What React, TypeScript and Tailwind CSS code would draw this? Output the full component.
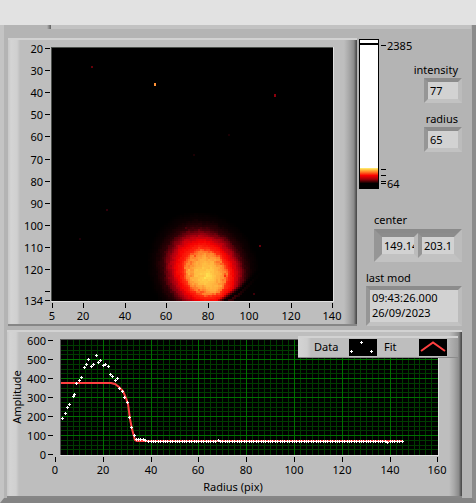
import type { ReactNode } from "react";

const font = "font-['Noto_Sans','Open_Sans',sans-serif]";

/* ---------- shared pieces ---------- */

function Panel({ children, className = "" }: { children: ReactNode; className?: string }) {
  return (
    <section
      className={
        "relative border-t-2 border-b-2 border-t-[#d2d2d2] border-b-[#868686] bg-[linear-gradient(to_right,#c8c8c8_0px,#d4d4d4_3px,#d0d0d0_9px,#bebebe_12px,#bebebe_calc(100%_-_13px),#a8a8a8_calc(100%_-_8px),#8a8a8a_calc(100%_-_3px),#6c6c6c_calc(100%_-_2px),#444444_100%)] " +
        className
      }
    >
      {children}
    </section>
  );
}

const sunken = "border-4 border-t-[#8c8c8c] border-l-[#969696] border-r-[#bcbcbc] border-b-[#c2c2c2] bg-[#d2d2d2]";

function Readout({ id, label, value }: { id: string; label: string; value: string }) {
  return (
    <div className="flex flex-col items-end">
      <label htmlFor={id} className="mr-1 leading-4">
        {label}
      </label>
      <input id={id} readOnly value={value} className={"h-[25px] w-[38px] px-0.5 outline-none " + sunken} />
    </div>
  );
}

/* ---------- intensity image ---------- */

const stops: [number, number[]][] = [
  [0, [255, 226, 80]],
  [0.3, [255, 196, 68]],
  [0.6, [255, 172, 60]],
  [0.84, [255, 130, 44]],
  [0.95, [255, 44, 14]],
  [1.18, [246, 0, 0]],
  [1.36, [188, 0, 14]],
  [1.56, [116, 0, 12]],
  [1.76, [48, 0, 5]],
  [2.05, [14, 0, 1]],
  [2.4, [0, 0, 0]],
];

function heat(r: number, dim: number) {
  let i = 1;
  while (i < stops.length - 1 && r > stops[i][0]) i++;
  const [a, ca] = stops[i - 1];
  const [b, cb] = stops[i];
  const t = Math.min(1, Math.max(0, (r - a) / (b - a)));
  const c = ca.map((v, k) => Math.round((v + (cb[k] - v) * t) * dim));
  return `rgb(${c[0]},${c[1]},${c[2]})`;
}

function noise(i: number, j: number) {
  const s = Math.sin(i * 12.9898 + j * 78.233) * 43758.5453;
  return s - Math.floor(s) - 0.5;
}

const cells: { x: number; y: number; fill: string }[] = [];
for (let j = 0; j < 44; j++) {
  for (let i = 0; i < 60; i++) {
    const x = 146 + i * 2;
    const y = 213 + j * 2;
    // The core sits a little lower and further right than the halo.
    const far = Math.min(1, Math.hypot(x - 207, y - 274) / 40);
    const dx = (x + 1 - (208 - 4 * far)) / 23.5;
    const dy = (y + 1 - (276 - 5 * far)) / 25;
    const base = Math.sqrt(dx * dx + dy * dy - 0.22 * dx * dy);
    const core = base < 0.8;
    const r = base + noise(i, j) * (core ? 0.14 : 0.06) + noise(i >> 1, j >> 2) * (core ? 0.24 : 0.05);
    // The lower right is cut by the shadow of a curved edge.
    const edge = (x - 216) * 0.6 + (y - 299) * 0.86 + (x > 240 ? (x - 240) * 0.25 : 0);
    let dim = edge > 0 ? Math.max(0.06, 1 - edge / 5) : 1;
    if (edge > 7 && edge < 10 && x > 222) dim = 0.4;
    cells.push({ x, y, fill: heat(Math.max(0, r), dim) });
  }
}

const specks = [
  { x: 91, y: 66, w: 2, h: 2, c: "#660008" },
  { x: 154, y: 83, w: 2, h: 3, c: "#ff9236" },
  { x: 274, y: 94, w: 2, h: 3, c: "#8c000c" },
  { x: 106, y: 209, w: 2, h: 2, c: "#30000a" },
  { x: 79, y: 238, w: 2, h: 2, c: "#200008" },
  { x: 259, y: 245, w: 2, h: 2, c: "#68000c" },
  { x: 185, y: 227, w: 2, h: 2, c: "#480008" },
  { x: 253, y: 293, w: 2, h: 2, c: "#3c0008" },
  { x: 228, y: 134, w: 2, h: 2, c: "#1c0004" },
  { x: 193, y: 154, w: 2, h: 2, c: "#1c0004" },
];

const imageY = [
  [20, 48], [30, 70], [40, 92], [50, 114], [60, 136], [70, 159], [80, 181],
  [90, 203], [100, 225], [110, 247], [120, 269], [134, 300],
];
const imageX = [[5, 52], [20, 83], [40, 125], [60, 166], [80, 208], [100, 249], [120, 291], [140, 332]];

function ImagePlot() {
  return (
    <svg viewBox="8 40 349 284" className="block h-auto w-full" role="img" aria-label="Intensity image">
      <g shapeRendering="crispEdges">
        <rect x="51" y="47" width="283" height="255" fill="#e0e0e0" />
        <rect x="51" y="47" width="282" height="254" fill="#4c504c" />
        <rect x="52" y="48" width="281" height="253" fill="#000" />
        {cells.map((c) => (
          <rect key={c.x + "-" + c.y} x={c.x} y={c.y} width="2" height="2" fill={c.fill} />
        ))}
        {specks.map((s) => (
          <rect key={s.x} x={s.x} y={s.y} width={s.w} height={s.h} fill={s.c} />
        ))}
        {imageY.map(([v, y]) => (
          <rect key={v} x="45" y={y} width="5" height="1" />
        ))}
        <rect x="45" y="291" width="5" height="1" />
        {imageX.map(([v, x]) => (
          <rect key={v} x={x} y="303" width="1" height="5" />
        ))}
      </g>
      <g fontSize="11">
        {imageY.map(([v, y]) => (
          <text key={v} x="43" y={y + 5} textAnchor="end">{v}</text>
        ))}
        {imageX.map(([v, x]) => (
          <text key={v} x={x} y="320" textAnchor="middle">{v}</text>
        ))}
      </g>
    </svg>
  );
}

/* ---------- colour scale ---------- */

function ColorScale() {
  return (
    <svg viewBox="359 38 54 158" className="block h-[158px] w-[54px]" role="img" aria-label="Colour scale">
      <defs>
        <linearGradient id="ramp" x1="0" y1="0" x2="0" y2="1">
          <stop offset="0" stopColor="#fff27a" />
          <stop offset="0.12" stopColor="#ffc040" />
          <stop offset="0.3" stopColor="#ff6a20" />
          <stop offset="0.5" stopColor="#fa0000" />
          <stop offset="0.75" stopColor="#a00008" />
          <stop offset="1" stopColor="#100000" />
        </linearGradient>
      </defs>
      <g shapeRendering="crispEdges">
        <rect x="359" y="39" width="20" height="150" />
        <rect x="360" y="40" width="18" height="3" fill="#fff" />
        <rect x="360" y="45" width="18" height="123" fill="#fff" />
        <rect x="360" y="168" width="18" height="15" fill="url(#ramp)" />
        <rect x="381" y="45" width="5" height="1" />
        <rect x="381" y="169" width="5" height="1" />
        <rect x="381" y="175" width="5" height="1" />
        <rect x="381" y="181" width="5" height="1" />
        <rect x="381" y="183" width="5" height="1" />
      </g>
      <g fontSize="11">
        <text x="387" y="50">2385</text>
        <text x="387" y="188">64</text>
      </g>
    </svg>
  );
}

/* ---------- radial profile ---------- */

const px = (v: number) => Math.round(55 + v * 2.39);
const py = (v: number) => Math.round(454 - v * 0.19);

const profile = [
  [62, 418], [65, 413], [67, 407], [69, 404], [73, 396], [74, 394], [76, 383], [79, 380], [81, 377],
  [84, 367], [86, 364], [88, 359], [91, 366], [93, 364], [96, 355], [98, 362], [100, 360], [103, 365],
  [105, 364], [108, 366], [110, 374], [112, 376], [115, 380], [117, 378], [119, 388], [122, 391],
  [124, 397], [127, 402], [129, 417], [131, 427], [134, 435], [136, 439], [138, 439], [140, 439],
  [143, 439], [145, 440],
];
for (let r = 39; r <= 145; r++) profile.push([px(r), r === 68 ? 440 : r === 139 ? 442 : 441]);

const minorX = Array.from({ length: 63 }, (_, i) => (i + 1) * 2.5).filter((v) => v % 20 !== 0);
const minorY = Array.from({ length: 23 }, (_, i) => (i + 1) * 25).filter((v) => v % 100 !== 0);
const majorX = [0, 20, 40, 60, 80, 100, 120, 140, 160];
const majorY = [0, 100, 200, 300, 400, 500, 600];

function ProfilePlot() {
  return (
    <svg viewBox="7 332 455 164" className="block h-auto w-full" role="img" aria-label="Amplitude against radius">
      <g shapeRendering="crispEdges">
        <rect x="60" y="339" width="379" height="117" fill="#e0e0e0" />
        <rect x="60" y="339" width="378" height="116" fill="#5a5a5a" />
        <rect x="61" y="340" width="377" height="115" fill="#000" />
        {minorX.map((v) => (
          px(v) > 61 && <rect key={v} x={px(v)} y="340" width="1" height="115" fill="#003c00" />
        ))}
        {minorY.map((v) => (
          <rect key={v} x="61" y={py(v)} width="377" height="1" fill="#003c00" />
        ))}
        {majorX.slice(1, -1).map((v) => (
          <rect key={v} x={px(v)} y="340" width="1" height="115" fill="#007000" />
        ))}
        {majorY.slice(1, -1).map((v) => (
          <rect key={v} x="61" y={py(v)} width="377" height="1" fill="#007000" />
        ))}
        {majorX.map((v) => (
          <rect key={v} x={px(v)} y="457" width="1" height="5" />
        ))}
        {majorY.map((v) => (
          <rect key={v} x="48" y={py(v)} width="5" height="1" />
        ))}
      </g>
      <path
        d="M61 383H111L115 384L119 387L123 391L126 398L128 404L130 419L132 429L135 440L137 441H402"
        fill="none"
        stroke="#ff4040"
        strokeWidth="2"
      />
      <g shapeRendering="crispEdges" fill="#fff">
        {profile.map(([x, y]) => (
          <path key={x} d={`M${x - 1} ${y}h1v-1h1v1h1v1h-1v1h-1v-1h-1z`} />
        ))}
      </g>
      <g fontSize="11">
        {majorY.map((v) => (
          <text key={v} x="46" y={py(v) + 5} textAnchor="end">{v}</text>
        ))}
        {majorX.map((v) => (
          <text key={v} x={px(v)} y="474" textAnchor="middle">{v}</text>
        ))}
        <text x="233" y="491" textAnchor="middle">Radius (pix)</text>
        <text transform="translate(21 397) rotate(-90)" textAnchor="middle">Amplitude</text>
      </g>
    </svg>
  );
}

function Legend() {
  return (
    <div className="absolute top-1 right-1 flex h-[22px] w-40 items-center border-b border-b-[#8c8c8c] border-t-2 border-t-[#d2d2d2] bg-[linear-gradient(to_right,#d4d4d4_0px,#cecece_9px,#bebebe_13px,#bebebe_calc(100%_-_13px),#9c9c9c_100%)] pl-4">
      <span className="w-[35px]">Data</span>
      <svg viewBox="0 0 28 17" className="h-[17px] w-7 bg-black" fill="#fff" shapeRendering="crispEdges" aria-hidden="true">
        <path d="M1 12h1v-1h1v1h1v1h-1v1h-1v-1h-1zM11 3h1v-1h1v1h1v1h-1v1h-1v-1h-1zM21 12h1v-1h1v1h1v1h-1v1h-1v-1h-1z" />
      </svg>
      <span className="w-[42px] pl-[7px]">Fit</span>
      <svg viewBox="0 0 28 17" className="h-[17px] w-7 bg-black" aria-hidden="true">
        <path d="M2 12L14 3.500L26 12" fill="none" stroke="#ff4040" strokeWidth="2" />
      </svg>
    </div>
  );
}

/* ---------- window ---------- */

export default function App() {
  return (
    <div className={"bg-[#e2e2e2] pt-[25px] text-[11px] text-black " + font}>
      <main className="border-r-4 border-b-[5px] border-l-4 border-r-[#8c8c8c] border-b-[#848484] border-l-[#c4c4c4] bg-[#b4b4b4]">
        <div className="flex h-1 pr-px">
          <div className="w-[43px]" />
          <div className="w-[4px] bg-linear-to-r from-[#b4b4b4] to-[#606060]" />
          <div className="flex-1 bg-[#c2c2c2]" />
        </div>
        <div className="flex pt-[9px] pr-[10px] pl-1">
          <Panel className="min-w-0 flex-1">
            <ImagePlot />
          </Panel>
          <aside className="flex w-[105px] flex-col justify-between pl-0.5">
            <div className="flex justify-between">
              <ColorScale />
              <div className="-ml-2 flex flex-col gap-2 pt-6">
                <Readout id="intensity" label="intensity" value="77" />
                <Readout id="radius" label="radius" value="65" />
              </div>
            </div>
            <div className="flex flex-col items-end gap-2">
              <fieldset className="w-[88px]">
                <legend className="leading-[18px]">center</legend>
                <div className="flex border-4 border-t-[#8a8a8a] border-r-[#bcbcbc] border-b-[#c2c2c2] border-l-[#969696]">
                  <input aria-label="center x" readOnly value="149.14" className={"h-[25px] w-1/2 min-w-0 pl-0.5 outline-none " + sunken} />
                  <input aria-label="center y" readOnly value="203.1" className={"h-[25px] w-1/2 min-w-0 pl-0.5 outline-none " + sunken} />
                </div>
              </fieldset>
              <div className="flex w-24 flex-col">
                <label htmlFor="last-mod" className="leading-4">
                  last mod
                </label>
                <textarea
                  id="last-mod"
                  readOnly
                  rows={2}
                  value={"09:43:26.000\n26/09/2023"}
                  className={"h-10 resize-none overflow-hidden pl-0.5 leading-[15px] outline-none " + sunken}
                />
              </div>
            </div>
          </aside>
        </div>
        <div className="pt-1 pr-[10px] pl-[3px]">
          <Panel>
            <ProfilePlot />
            <Legend />
          </Panel>
        </div>
      </main>
    </div>
  );
}
